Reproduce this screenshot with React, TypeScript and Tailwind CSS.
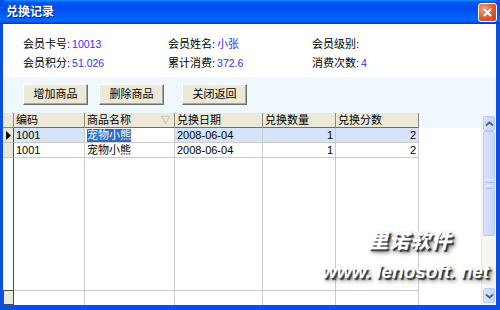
import React from "react";

const rows = [
  { code: "1001", name: "宠物小熊", date: "2008-06-04", qty: "1", pts: "2", active: true },
  { code: "1001", name: "宠物小熊", date: "2008-06-04", qty: "1", pts: "2", active: false },
];

const Chevron = ({ down }: { down?: boolean }) => (
  <svg width="9" height="6" viewBox="0 0 9 6">
    <path
      d={down ? "M1 1.5 L4.5 4.5 L8 1.5" : "M1 4.5 L4.5 1.5 L8 4.5"}
      fill="none"
      stroke="#4d6185"
      strokeWidth="1.8"
    />
  </svg>
);

const Field = ({ label, value }: { label: string; value: string }) => (
  <div className="flex items-center">
    <span>{label}:</span>
    <span className="ml-[2px] text-[#3030ff] font-['Liberation_Sans',sans-serif] text-[10.5px]">{value}</span>
  </div>
);

const Btn = ({ text }: { text: string }) => (
  <button className="h-[21px] w-[65px] bg-[#ece9d8] border border-t-white border-l-white border-r-[#716f64] border-b-[#716f64] shadow-[inset_-1px_-1px_0_#aca899] text-[11px] text-black">
    {text}
  </button>
);

export default function App() {
  return (
    <div className="relative w-[500px] h-[310px] flex flex-col bg-[#0b4fe0] font-['Liberation_Sans','Noto_Sans_CJK_SC',sans-serif] text-[11px] text-black overflow-hidden">
      {/* title bar */}
      <div className="h-[24px] flex items-center justify-between pl-[6px] pr-[3px] rounded-t-[7px] bg-[linear-gradient(to_bottom,#0997ff_0%,#0053ee_10%,#0050ee_40%,#0066ff_85%,#005bff_92%,#003dd7_96%,#003dd7_100%)]">
        <span className="text-white font-bold text-[12px] [text-shadow:1px_1px_0_#0a1e6e]">兑换记录</span>
        <div className="w-[19px] h-[19px] rounded-[3px] border border-white bg-[radial-gradient(circle_at_30%_30%,#f3a181_0%,#e35f36_50%,#c23a14_100%)] flex items-center justify-center">
          <svg width="11" height="11" viewBox="0 0 11 11">
            <path d="M2 2 L9 9 M9 2 L2 9" stroke="white" strokeWidth="2" />
          </svg>
        </div>
      </div>

      {/* client */}
      <div className="flex-1 flex flex-col ml-[3px] mr-[4px] mb-[5px] bg-white">
        <div className="h-[53px] pl-[20px] pt-[11px] grid grid-cols-[145px_144px_1fr] auto-rows-[19px]">
          <Field label="会员卡号" value="10013" />
          <div className="flex items-center">
            <span>会员姓名:</span>
            <span className="ml-[2px] text-[#3030ff]">小张</span>
          </div>
          <Field label="会员级别" value="" />
          <Field label="会员积分" value="51.026" />
          <Field label="累计消费" value="372.6" />
          <Field label="消费次数" value="4" />
        </div>

        <div className="h-[36px] bg-[#f0f8ff] flex items-start pt-[7px] pl-[20px]">
          <Btn text="增加商品" />
          <div className="w-[11px]" />
          <Btn text="删除商品" />
          <div className="w-[18px]" />
          <Btn text="关闭返回" />
        </div>

        {/* grid */}
        <div className="flex-1 flex bg-white">
          {/* row header */}
          <div className="w-[11px] flex flex-col">
            <div className="h-[15px] bg-[#ece9d8] border-b border-r border-b-[#8c8b80] border-r-[#8c8b80]" />
            {rows.map((r, i) => (
              <div key={i} className="h-[15px] bg-[#ece9d8] border-b border-r border-b-[#c8c6b8] border-r-[#4a4a4a] flex items-center justify-center">
                {r.active && (
                  <svg width="5" height="9" viewBox="0 0 5 9">
                    <path d="M0 0 L5 4.5 L0 9 Z" fill="black" />
                  </svg>
                )}
              </div>
            ))}
            <div className="flex-1 border-r border-r-[#4a4a4a]" />
            <div className="h-[15px] bg-[#ece9d8] border border-[#4a4a4a]" />
          </div>

          {[
            { title: "编码", w: "w-[71px]", key: "code", right: false },
            { title: "商品名称", w: "w-[90px]", key: "name", right: false },
            { title: "兑换日期", w: "w-[88px]", key: "date", right: false },
            { title: "兑换数量", w: "w-[73px]", key: "qty", right: true },
            { title: "兑换分数", w: "w-[83px]", key: "pts", right: true },
          ].map((c) => (
            <div key={c.key} className={c.w + " flex flex-col"}>
              <div className="h-[15px] bg-[#ece9d8] border-b border-r border-b-[#716f64] border-r-[#8c8b80] flex items-center pl-[2px] relative">
                {c.title}
                {c.key === "name" && (
                  <span className="absolute right-[4px] top-[1px] text-[9px] text-[#8a8a8a]">▽</span>
                )}
              </div>
              {rows.map((r, i) => {
                const v = (r as Record<string, string | boolean>)[c.key] as string;
                const editing = r.active && c.key === "name";
                return (
                  <div
                    key={i}
                    className={
                      "h-[15px] border-b border-r border-[#cbcbcb] flex items-center px-[2px] " +
                      (c.right ? "justify-end " : "") +
                      (r.active && !editing ? "bg-[#d6e4f7]" : "bg-white")
                    }
                  >
                    {editing ? (
                      <span className="bg-[#316ac5] text-white leading-[13px]">{v}</span>
                    ) : (
                      v
                    )}
                  </div>
                );
              })}
              <div className="flex-1 border-b border-r border-[#cbcbcb]" />
              <div className="h-[14px] border-r border-[#cbcbcb]" />
            </div>
          ))}

          <div className="flex-1 flex flex-col">
            <div className="h-[15px] bg-[#f0f8ff]" />
            <div className="flex-1" />
          </div>

          {/* scrollbar */}
          <div className="w-[15px] flex flex-col bg-[#f7f7f2] pt-[3px] pb-[2px] border-l border-[#eeede5]">
            <div className="h-[15px] mx-[1px] rounded-[2px] border border-[#b7cbf7] bg-[linear-gradient(to_right,#d8e4fd,#c1d3fb)] flex items-center justify-center">
              <Chevron />
            </div>
            <div className="h-[105px] mx-[1px] rounded-[2px] border border-[#b7cbf7] bg-[linear-gradient(to_right,#d8e4fd,#c6d6fb)] flex flex-col items-center justify-center gap-[2px]">
              <div className="w-[7px] h-px bg-[#eef3fe]" />
              <div className="w-[7px] h-px bg-[#a9bdec]" />
              <div className="w-[7px] h-px bg-[#eef3fe]" />
              <div className="w-[7px] h-px bg-[#a9bdec]" />
            </div>
            <div className="flex-1" />
            <div className="h-[15px] mx-[1px] rounded-[2px] border border-[#b7cbf7] bg-[linear-gradient(to_right,#d8e4fd,#c1d3fb)] flex items-center justify-center">
              <Chevron down />
            </div>
          </div>
        </div>
      </div>

      {/* watermark */}
      <div className="absolute left-[368px] top-[228px] text-white font-black italic text-[20px] leading-[24px] tracking-[1px] font-['Noto_Sans_CJK_SC',sans-serif] [text-shadow:2px_2px_1px_#3a3a3a,3px_3px_4px_#666]">
        里诺软件
      </div>
      <div className="absolute left-[322px] top-[260px] text-white font-bold italic text-[19px] leading-[24px] font-['Liberation_Sans',sans-serif] [text-shadow:2px_2px_1px_#3a3a3a,3px_3px_4px_#666] whitespace-nowrap">
        www. lenosoft. net
      </div>
    </div>
  );
}
